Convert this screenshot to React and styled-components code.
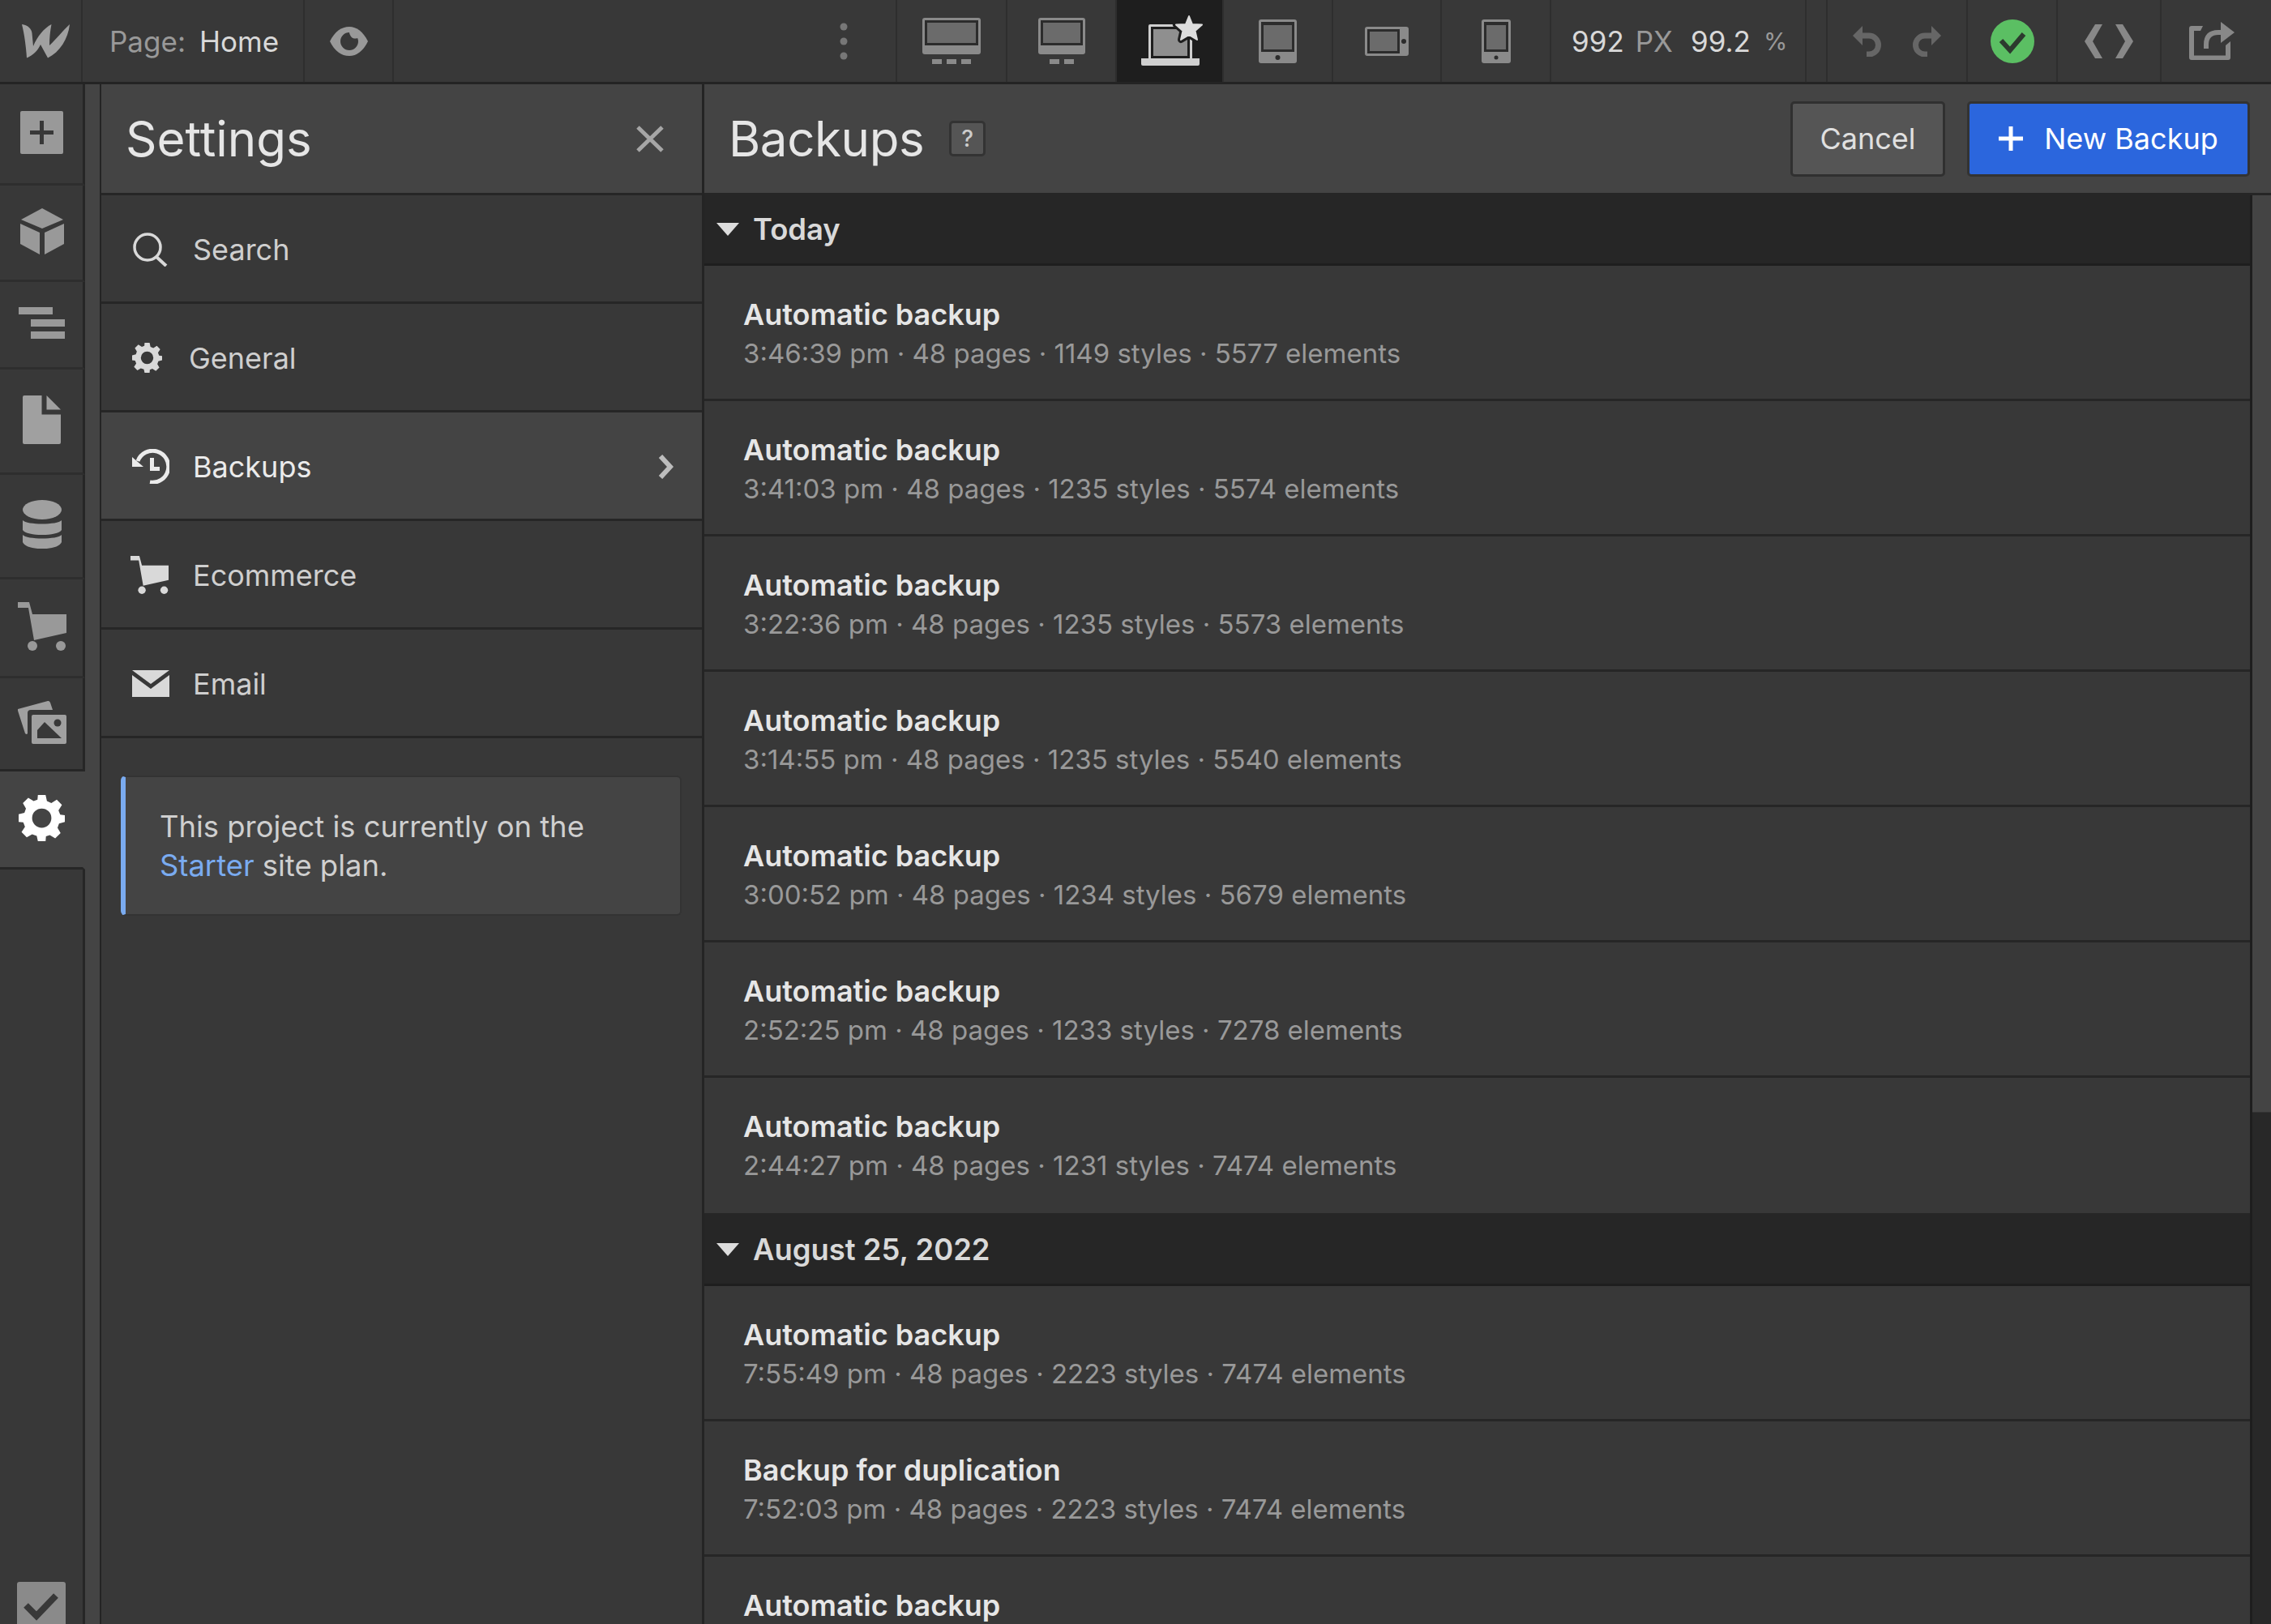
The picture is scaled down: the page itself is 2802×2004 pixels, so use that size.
import React from "react";
import styled, { createGlobalStyle } from "styled-components";

const GlobalStyle = createGlobalStyle`
  html, body {
    margin: 0;
    padding: 0;
    background: #383838;
    overflow: hidden;
  }
  * {
    box-sizing: border-box;
  }
`;

const Page = styled.div`
  width: 2802px;
  height: 2004px;
  display: flex;
  flex-direction: column;
  overflow: hidden;
  background: #383838;
  font-family: Inter, "Liberation Sans", sans-serif;
  color: #d9d9d9;
`;

const TopBar = styled.header`
  height: 104px;
  flex: none;
  display: flex;
  background: #383838;
  border-bottom: 3px solid #242424;
`;

const BarCell = styled.div`
  width: ${(p) => p.$w}px;
  flex: ${(p) => (p.$grow ? 1 : "none")};
  display: flex;
  align-items: center;
  justify-content: ${(p) => p.$justify || "center"};
  gap: ${(p) => p.$gap || 0}px;
  padding: ${(p) => p.$pad || 0};
  background: ${(p) => (p.$active ? "#1e1e1e" : "transparent")};
  border-right: 2px solid ${(p) => (p.$noline ? "transparent" : "#2e2e2e")};
`;

const BarText = styled.span`
  font-size: ${(p) => p.$size || 35}px;
  color: ${(p) => (p.$dim ? "#999" : "#d9d9d9")};
  margin-right: ${(p) => p.$mr || 0}px;
`;

const Workspace = styled.div`
  flex: 1;
  display: flex;
  min-height: 0;
`;

const Rail = styled.nav`
  width: 105px;
  flex: none;
  display: flex;
  flex-direction: column;
`;

const RailItem = styled.div`
  height: ${(p) => p.$h}px;
  flex: none;
  display: flex;
  align-items: center;
  justify-content: center;
  padding: 0 0 4px 1px;
  background: ${(p) => (p.$active ? "#444" : "transparent")};
  border-right: 3px solid ${(p) => (p.$active ? "#444" : "#262626")};
  border-bottom: 3px solid ${(p) => (p.$line || "#2e2e2e")};
`;

const RailFill = styled.div`
  flex: 1;
  display: flex;
  flex-direction: column;
  justify-content: flex-end;
  overflow: hidden;
  padding-left: 21px;
  border-right: 3px solid #262626;
`;

const RailCheck = styled.svg`
  display: block;
  flex: none;
  margin-bottom: -8px;
`;

const Strip = styled.div`
  width: 18px;
  flex: none;
  background: #444;
`;

const SettingsPanel = styled.aside`
  width: 746px;
  flex: none;
  display: flex;
  flex-direction: column;
  background: #383838;
  border-left: 2px solid #242424;
  border-right: 3px solid #242424;
`;

const PanelHeader = styled.div`
  height: 137px;
  flex: none;
  display: flex;
  align-items: center;
  justify-content: space-between;
  padding: 0 ${(p) => p.$right || 0}px 0 ${(p) => p.$left || 0}px;
  background: #444;
  border-bottom: 3px solid #262626;
`;

const Title = styled.h1`
  margin: 0;
  font-size: 60px;
  font-weight: 400;
  letter-spacing: ${(p) => p.$track || 0}px;
  color: #e6e6e6;
`;

const TitleGroup = styled.div`
  display: flex;
  align-items: center;
  gap: 31px;
`;

const HelpBadge = styled.span`
  width: 45px;
  height: 44px;
  display: flex;
  align-items: center;
  justify-content: center;
  background: #555;
  border: 3px solid #333;
  border-radius: 5px;
  font-size: 28px;
  font-weight: 500;
  color: #ccc;
`;

const MenuRow = styled.div`
  height: 134px;
  flex: none;
  display: flex;
  align-items: center;
  padding: 2px 35px 0 ${(p) => p.$left || 38}px;
  background: ${(p) => (p.$active ? "#444" : "transparent")};
  border-bottom: 3px solid #262626;
  font-size: 36px;
  color: ${(p) => (p.$active ? "#ebebeb" : "#cfcfcf")};
`;

const MenuIcon = styled.span`
  width: ${(p) => p.$w || 75}px;
  flex: none;
  display: flex;
  align-items: center;
`;

const MenuLabel = styled.span`
  flex: 1;
`;

const InfoBox = styled.div`
  margin: 46px 25px 0 24px;
  padding: 37px 30px 36px 42px;
  background: #444;
  border: 2px solid #333;
  border-left: 6px solid #7aabf0;
  border-radius: 6px;
  font-size: 36.4px;
  line-height: 48px;
  color: #cfcfcf;
`;

const PlanLink = styled.span`
  color: #7aabf0;
`;

const MainPanel = styled.main`
  flex: 1;
  display: flex;
  flex-direction: column;
  min-width: 0;
`;

const PrimaryActions = styled.div`
  display: flex;
  gap: 27px;
`;

const ActionButton = styled.button`
  height: 93px;
  width: ${(p) => p.$w}px;
  display: flex;
  align-items: center;
  justify-content: center;
  gap: 26px;
  padding: 0;
  font-family: inherit;
  font-size: 36px;
  color: ${(p) => (p.$primary ? "#fff" : "#e0e0e0")};
  background: ${(p) => (p.$primary ? "#2b66dd" : "#555")};
  border: 3px solid ${(p) => (p.$primary ? "#333" : "#303030")};
  border-radius: 5px;
`;

const ListArea = styled.div`
  flex: 1;
  display: flex;
  min-height: 0;
`;

const BackupList = styled.div`
  flex: 1;
  min-width: 0;
  overflow: hidden;
`;

const Section = styled.div`
  height: 87px;
  display: flex;
  align-items: center;
  gap: 17px;
  padding-left: 15px;
  background: #262626;
  border-bottom: 3px solid #1e1e1e;
  font-size: 36.4px;
  font-weight: 600;
  color: #d9d9d9;
`;

const Triangle = styled.span`
  width: 0;
  height: 0;
  border-left: 14px solid transparent;
  border-right: 14px solid transparent;
  border-top: 16px solid #ddd;
`;

const BackupRow = styled.div`
  height: ${(p) => (p.$tall ? 170 : 167)}px;
  padding: 36px 0 0 48px;
  background: #383838;
  border-bottom: 3px solid #262626;
`;

const BackupName = styled.div`
  font-size: 36px;
  line-height: 48px;
  font-weight: 600;
  color: #e6e6e6;
`;

const BackupMeta = styled.div`
  font-size: 33px;
  line-height: 48px;
  color: #999;
`;

const ScrollTrack = styled.div`
  width: 26px;
  flex: none;
  background: #282828;
  border-left: 3px solid #1e1e1e;
`;

const ScrollThumb = styled.div`
  height: 1132px;
  background: #444;
  border-bottom: 1px solid #333;
`;

const Logo = () => (
  <svg width="59" height="42" viewBox="0 0 59 42">
    <path
      fill="#a0a0a0"
      d="M0 0C7 1 12 5 12.500 11L14 27C19 15 27 5 36.500 0C35 8 34 16 34 26C42 19 50 8 59 0C57 18 47 34 32 41.500L23 25C20 32 13 39 6 41.500C5 27 3 12 0 0Z"
    />
  </svg>
);

const Eye = () => (
  <svg width="47" height="36" viewBox="0 0 47 36">
    <path fill="#999" d="M0 18C6 6 14 0 24 0C33 0 41 6 47 18C41 30 33 36 24 36C14 36 6 30 0 18Z" />
    <path fill="#383838" d="M24 7A11 11 0 1 0 35 18C35 16 34.500 15 34 14C32 15 28 15 26 12C25 10 24 9 24 7Z" />
  </svg>
);

const Dots = () => (
  <svg width="10" height="46" viewBox="0 0 10 46">
    <circle cx="5" cy="5" r="4.500" fill="#777" />
    <circle cx="5" cy="23" r="4.500" fill="#777" />
    <circle cx="5" cy="41" r="4.500" fill="#777" />
  </svg>
);

const Desktop = ({ width, squares }) => {
  const total = squares * 12 + (squares - 1) * 6;
  const start = (width - total) / 2;
  return (
    <svg width={width} height="57" viewBox={`0 0 ${width} 57`}>
      <rect width={width} height="45" rx="3" fill="#8a8a8a" />
      <rect x="3" y="3" width={width - 6} height="31" fill="#2c2c2c" />
      <rect x="6" y="6" width={width - 12} height="25" fill="#6b6b6b" />
      {Array.from({ length: squares }).map((_, i) => (
        <rect key={i} x={start + i * 18} y="51" width="12" height="6" fill="#8a8a8a" />
      ))}
    </svg>
  );
};

const starPoints = "60,1 64,11 76,11.500 67.500,19 70,30 60,24 50,30 52.500,19 44,11.500 56,11";

const LaptopStar = () => (
  <svg width="76" height="64" viewBox="0 0 76 64" overflow="visible">
    <rect x="10" y="11" width="54" height="44" rx="2" fill="#cfcfcf" />
    <rect x="13" y="14" width="48" height="39" fill="#1e1e1e" />
    <rect x="16" y="17" width="42" height="33" fill="#8f8f8f" />
    <path fill="#cfcfcf" d="M1 53H73V60Q73 62 71 62H3Q1 62 1 60Z" />
    <polygon points={starPoints} fill="#1e1e1e" stroke="#1e1e1e" strokeWidth="8" strokeLinejoin="round" />
    <polygon points={starPoints} fill="#ddd" stroke="#ddd" strokeWidth="2" strokeLinejoin="round" />
  </svg>
);

const Tablet = () => (
  <svg width="47" height="54" viewBox="0 0 47 54">
    <rect width="47" height="54" rx="3" fill="#8a8a8a" />
    <rect x="3" y="3" width="41" height="37" fill="#2c2c2c" />
    <rect x="6" y="7" width="35" height="30" fill="#6b6b6b" />
    <circle cx="23.500" cy="47" r="3" fill="#2c2c2c" />
  </svg>
);

const TabletSide = () => (
  <svg width="54" height="36" viewBox="0 0 54 36">
    <rect width="54" height="36" rx="3" fill="#8a8a8a" />
    <rect x="3" y="3" width="40" height="30" fill="#2c2c2c" />
    <rect x="6" y="6" width="34" height="24" fill="#6b6b6b" />
    <circle cx="48" cy="18" r="3" fill="#2c2c2c" />
  </svg>
);

const Phone = () => (
  <svg width="36" height="54" viewBox="0 0 36 54">
    <rect width="36" height="54" rx="3" fill="#8a8a8a" />
    <rect x="3" y="3" width="30" height="37" fill="#2c2c2c" />
    <rect x="6" y="7" width="24" height="30" fill="#6b6b6b" />
    <circle cx="18" cy="47" r="2.500" fill="#2c2c2c" />
  </svg>
);

const Undo = ({ flip }) => (
  <svg width="38" height="38" viewBox="0 0 38 38" style={flip ? { transform: "scaleX(-1)" } : undefined}>
    <path fill="#666" d="M0 12L12 0V24Z" />
    <path fill="none" stroke="#666" strokeWidth="7" d="M10 12H20A11.500 11.500 0 0 1 20 35H17" />
  </svg>
);

const StatusOk = () => (
  <svg width="54" height="54" viewBox="0 0 54 54">
    <circle cx="27" cy="27" r="27" fill="#5bbf63" />
    <path fill="none" stroke="#2c3a2e" strokeWidth="6" d="M13 26L24 38L41 18" />
  </svg>
);

const CodeBraces = () => (
  <svg width="60" height="42" viewBox="0 0 60 42">
    <path fill="#888" d="M13 0H22L10 21L22 42H13L0 21Z" />
    <path fill="#888" d="M47 0H38L50 21L38 42H47L60 21Z" />
  </svg>
);

const Share = () => (
  <svg width="57" height="48" viewBox="0 0 57 48">
    <path fill="#888" d="M3 5H17L14 11H6V41.500H45V29L51 24V44Q51 47 48 47H3Q0 47 0 44V8Q0 5 3 5Z" />
    <path fill="#888" d="M39 0L56 13L39 26Z" />
    <path fill="none" stroke="#888" strokeWidth="6" d="M21 33V28Q21 13 36 13H40" />
  </svg>
);

const PlusBox = () => (
  <svg width="53" height="53" viewBox="0 0 53 53">
    <rect width="53" height="53" rx="2" fill="#999" />
    <path fill="#383838" d="M24 12H29V24H41V29H29V41H24V29H12V24H24Z" />
  </svg>
);

const Cube = () => (
  <svg width="54" height="57" viewBox="0 0 54 57">
    <path fill="#999" d="M27 0L53 14L27 25L1 14Z" />
    <path fill="#999" d="M0 19L24 30V57L0 44Z" />
    <path fill="#999" d="M54 19L30 30V57L54 44Z" />
  </svg>
);

const Navigator = () => (
  <svg width="57" height="39" viewBox="0 0 57 39">
    <rect x="0" y="0" width="42" height="9" fill="#999" />
    <rect x="15" y="15" width="42" height="9" fill="#999" />
    <rect x="15" y="30" width="42" height="9" fill="#999" />
  </svg>
);

const PageFile = () => (
  <svg width="47" height="60" viewBox="0 0 47 60">
    <path fill="#a0a0a0" d="M2 0H23.500V23.500H47V58Q47 60 45 60H2Q0 60 0 58V2Q0 0 2 0Z" />
    <path fill="#a0a0a0" d="M29.500 0L47 17.500H29.500Z" />
  </svg>
);

const Database = () => (
  <svg width="48" height="60" viewBox="0 0 48 60">
    <ellipse cx="24" cy="12" rx="24" ry="12" fill="#a0a0a0" />
    <path fill="#a0a0a0" d="M0 25C5 31 43 31 48 25V37C43 45 5 45 0 37Z" />
    <path fill="#a0a0a0" d="M0 43C5 49 43 49 48 43V52C44 63 4 63 0 52Z" />
  </svg>
);

const Cart = ({ color, w, h }) => (
  <svg width={w} height={h} viewBox="0 0 60 60">
    <path fill={color} d="M0 0H14L18 15H60V38L20 47L13 7H0Z" />
    <circle cx="18" cy="54" r="6" fill={color} />
    <circle cx="53" cy="54" r="6" fill={color} />
  </svg>
);

const Images = () => (
  <svg width="60" height="54" viewBox="0 0 60 54">
    <path fill="#a0a0a0" d="M0 11L37 1Q39 0.500 40 3L43 12H16Q12 12 12 16V41Q11 43 9 41L0 13Z" />
    <rect x="17" y="18" width="43" height="36" rx="2" fill="#a0a0a0" />
    <path fill="#383838" d="M24 37L33 27L54 47H24Z" />
    <circle cx="49" cy="28" r="4.500" fill="#383838" />
  </svg>
);

const Gear = ({ size, color, hole }) => (
  <svg width={size} height={size} viewBox="0 0 24 24">
    <path
      fill={color}
      d="M10 0H14L14.700 3.200L17 4.200L19.800 2.400L22.500 5.200L20.700 8L21.600 10.200L24 10.500V14L21 14.800L20.200 17L21.800 19.800L19 22.500L16.200 20.800L14.200 21.500L14 24H10L9.400 21.300L7 20.400L4.200 22L1.500 19.300L3.300 16.500L2.400 14.200L0 14V10L3 9.300L3.800 7L2.200 4.200L5 1.500L7.800 3.200L9.800 2.400Z"
    />
    <circle cx="12" cy="12" r="5" fill={hole} />
  </svg>
);

const SearchIcon = () => (
  <svg width="44" height="42" viewBox="0 0 44 42">
    <circle cx="19" cy="18" r="16" fill="none" stroke="#d9d9d9" strokeWidth="3.500" />
    <path stroke="#d9d9d9" strokeWidth="4" d="M30 30L42 41" />
  </svg>
);

const HistoryIcon = () => (
  <svg width="46" height="43" viewBox="0 0 46 43">
    <path fill="none" stroke="#ebebeb" strokeWidth="5" d="M7 15A19.500 19.500 0 1 1 22 41" />
    <path fill="#ebebeb" d="M0 10L14 22H0Z" />
    <path fill="#ebebeb" d="M22 11H27V22H34V27H22Z" />
  </svg>
);

const Chevron = () => (
  <svg width="20" height="30" viewBox="0 0 20 30">
    <path fill="none" stroke="#bdbdbd" strokeWidth="6" d="M4 2L16 15L4 28" />
  </svg>
);

const Mail = () => (
  <svg width="46" height="33" viewBox="0 0 46 33">
    <path fill="#d9d9d9" d="M0 0H46L23 17Z" />
    <path fill="#d9d9d9" d="M0 6L23 23L46 6V33H0Z" />
  </svg>
);

const CloseIcon = () => (
  <svg width="34" height="33" viewBox="0 0 34 33">
    <path stroke="#a6a6a6" strokeWidth="5" d="M2 2L32 31M32 2L2 31" />
  </svg>
);

const PlusIcon = () => (
  <svg width="30" height="30" viewBox="0 0 30 30">
    <path fill="#fff" d="M12.500 0H17.500V12.500H30V17.500H17.500V30H12.500V17.500H0V12.500H12.500Z" />
  </svg>
);

const railItems = [
  { h: 125, icon: <PlusBox /> },
  { h: 119, icon: <Cube /> },
  { h: 108, icon: <Navigator /> },
  { h: 130, icon: <PageFile /> },
  { h: 129, icon: <Database /> },
  { h: 122, icon: <Cart color="#999" w={60} h={60} /> },
  { h: 115, icon: <Images />, line: "#262626" },
  { h: 121, icon: <Gear size={57} color="#fff" hole="#444" />, active: true, line: "#262626" },
];

const todayBackups = [
  ["Automatic backup", "3:46:39 pm · 48 pages · 1149 styles · 5577 elements"],
  ["Automatic backup", "3:41:03 pm · 48 pages · 1235 styles · 5574 elements"],
  ["Automatic backup", "3:22:36 pm · 48 pages · 1235 styles · 5573 elements"],
  ["Automatic backup", "3:14:55 pm · 48 pages · 1235 styles · 5540 elements"],
  ["Automatic backup", "3:00:52 pm · 48 pages · 1234 styles · 5679 elements"],
  ["Automatic backup", "2:52:25 pm · 48 pages · 1233 styles · 7278 elements"],
  ["Automatic backup", "2:44:27 pm · 48 pages · 1231 styles · 7474 elements"],
];

const augustBackups = [
  ["Automatic backup", "7:55:49 pm · 48 pages · 2223 styles · 7474 elements"],
  ["Backup for duplication", "7:52:03 pm · 48 pages · 2223 styles · 7474 elements"],
  ["Automatic backup"],
];

const Backup = ({ name, meta, tall }) => (
  <BackupRow $tall={tall}>
    <BackupName>{name}</BackupName>
    {meta && <BackupMeta>{meta}</BackupMeta>}
  </BackupRow>
);

export default function App() {
  return (
    <Page>
      <GlobalStyle />
      <TopBar>
        <BarCell $w={102} $pad="0 0 0 13px"><Logo /></BarCell>
        <BarCell $w={274} $justify="flex-start" $pad="0 0 0 33px">
          <BarText $dim $mr={17}>Page:</BarText>
          <BarText>Home</BarText>
        </BarCell>
        <BarCell $w={110}><Eye /></BarCell>
        <BarCell $grow $justify="flex-end" $pad="0 59px 0 0"><Dots /></BarCell>
        <BarCell $w={136}><Desktop width={72} squares={3} /></BarCell>
        <BarCell $w={135}><Desktop width={58} squares={2} /></BarCell>
        <BarCell $w={132} $active $pad="0 0 0 3px"><LaptopStar /></BarCell>
        <BarCell $w={135}><Tablet /></BarCell>
        <BarCell $w={134}><TabletSide /></BarCell>
        <BarCell $w={135}><Phone /></BarCell>
        <BarCell $w={315} $justify="flex-start" $pad="0 0 0 25px">
          <BarText $mr={14}>992</BarText>
          <BarText $dim $mr={22}>PX</BarText>
          <BarText $mr={16}>99.2</BarText>
          <BarText $dim $size={30}>%</BarText>
        </BarCell>
        <BarCell $w={26} />
        <BarCell $w={173} $gap={33}>
          <Undo />
          <Undo flip />
        </BarCell>
        <BarCell $w={111}><StatusOk /></BarCell>
        <BarCell $w={128}><CodeBraces /></BarCell>
        <BarCell $w={135} $noline $pad="0 8px 0 0"><Share /></BarCell>
      </TopBar>
      <Workspace>
        <Rail>
          {railItems.map((item, i) => (
            <RailItem key={i} $h={item.h} $active={item.active} $line={item.line}>
              {item.icon}
            </RailItem>
          ))}
          <RailFill>
            <RailCheck width="60" height="60" viewBox="0 0 60 60">
              <rect width="60" height="60" rx="3" fill="#8a8a8a" />
              <path fill="none" stroke="#383838" strokeWidth="8" d="M11 29L24 42L48 17" />
            </RailCheck>
          </RailFill>
        </Rail>
        <Strip />
        <SettingsPanel>
          <PanelHeader $left={30} $right={47}>
            <Title>Settings</Title>
            <CloseIcon />
          </PanelHeader>
          <MenuRow>
            <MenuIcon><SearchIcon /></MenuIcon>
            <MenuLabel>Search</MenuLabel>
          </MenuRow>
          <MenuRow>
            <MenuIcon $w={70}><Gear size={37} color="#d9d9d9" hole="#383838" /></MenuIcon>
            <MenuLabel>General</MenuLabel>
          </MenuRow>
          <MenuRow $active>
            <MenuIcon><HistoryIcon /></MenuIcon>
            <MenuLabel>Backups</MenuLabel>
            <Chevron />
          </MenuRow>
          <MenuRow $left={35}>
            <MenuIcon $w={78}><Cart color="#d9d9d9" w={49} h={47} /></MenuIcon>
            <MenuLabel>Ecommerce</MenuLabel>
          </MenuRow>
          <MenuRow>
            <MenuIcon><Mail /></MenuIcon>
            <MenuLabel>Email</MenuLabel>
          </MenuRow>
          <InfoBox>
            This project is currently on the
            <br />
            <PlanLink>Starter</PlanLink> site plan.
          </InfoBox>
        </SettingsPanel>
        <MainPanel>
          <PanelHeader $left={30} $right={26}>
            <TitleGroup>
              <Title $track={-0.4}>Backups</Title>
              <HelpBadge>?</HelpBadge>
            </TitleGroup>
            <PrimaryActions>
              <ActionButton $w={191}>Cancel</ActionButton>
              <ActionButton $w={349} $primary>
                <PlusIcon />
                New Backup
              </ActionButton>
            </PrimaryActions>
          </PanelHeader>
          <ListArea>
            <BackupList>
              <Section>
                <Triangle />
                Today
              </Section>
              {todayBackups.map(([name, meta], i) => (
                <Backup key={i} name={name} meta={meta} tall={i === todayBackups.length - 1} />
              ))}
              <Section>
                <Triangle />
                August 25, 2022
              </Section>
              {augustBackups.map(([name, meta], i) => (
                <Backup key={i} name={name} meta={meta} />
              ))}
            </BackupList>
            <ScrollTrack>
              <ScrollThumb />
            </ScrollTrack>
          </ListArea>
        </MainPanel>
      </Workspace>
    </Page>
  );
}
